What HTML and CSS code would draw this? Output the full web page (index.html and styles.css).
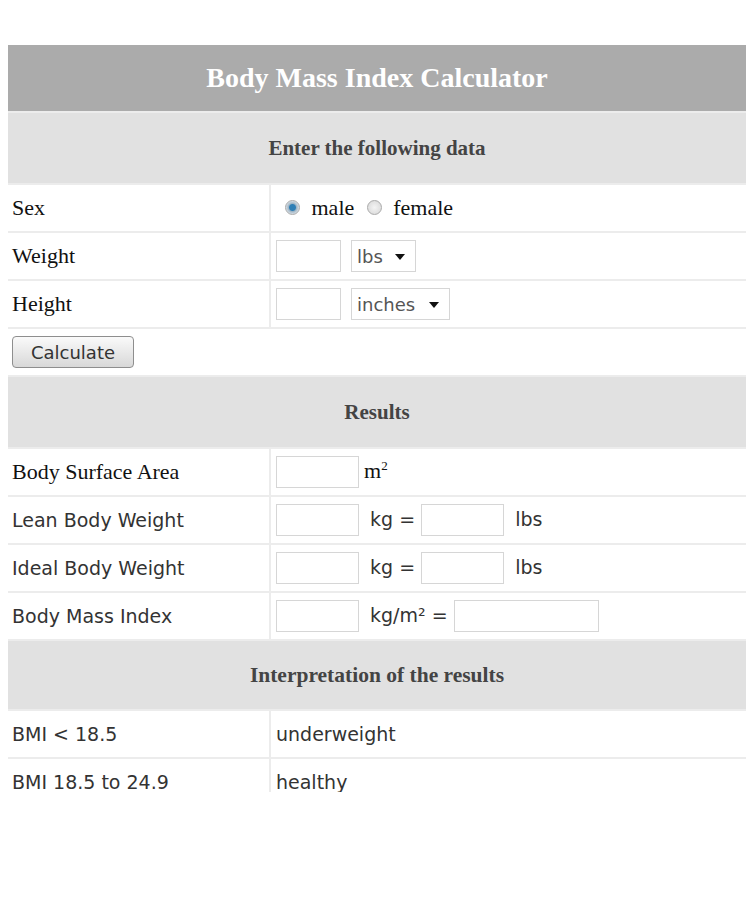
FILE: index.html
```html
<!DOCTYPE html>
<html lang="en">
<head>
  <meta charset="UTF-8">
  <title>Body Mass Index Calculator</title>
  <link rel="stylesheet" href="styles.css">
</head>
<body>

<div class="frame">
  <table class="calc">
    <tr>
      <th colspan="2" class="title">Body Mass Index Calculator</th>
    </tr>
    <tr>
      <th colspan="2" class="section">Enter the following data</th>
    </tr>
    <tr>
      <td class="label serif">Sex</td>
      <td class="serif">
        <label class="opt"><input type="radio" name="sex" checked> male</label>
        <label class="opt"><input type="radio" name="sex"> female</label>
      </td>
    </tr>
    <tr>
      <td class="label serif">Weight</td>
      <td>
        <input type="text" class="box small">
        <span class="sel"><select class="unit"><option>lbs</option><option>kg</option></select></span>
      </td>
    </tr>
    <tr>
      <td class="label serif">Height</td>
      <td>
        <input type="text" class="box small">
        <span class="sel"><select class="unit wide"><option>inches</option><option>cm</option></select></span>
      </td>
    </tr>
    <tr>
      <td colspan="2" class="actions"><button type="button">Calculate</button></td>
    </tr>
    <tr>
      <th colspan="2" class="section">Results</th>
    </tr>
    <tr>
      <td class="label serif">Body Surface Area</td>
      <td><input type="text" class="box"><span class="serif">m<sup>2</sup></span></td>
    </tr>
    <tr>
      <td class="label">Lean Body Weight</td>
      <td><input type="text" class="box"> kg = <input type="text" class="box"> lbs</td>
    </tr>
    <tr>
      <td class="label">Ideal Body Weight</td>
      <td><input type="text" class="box"> kg = <input type="text" class="box"> lbs</td>
    </tr>
    <tr>
      <td class="label">Body Mass Index</td>
      <td><input type="text" class="box"> kg/m² = <input type="text" class="box long"></td>
    </tr>
    <tr>
      <th colspan="2" class="section narrow">Interpretation of the results</th>
    </tr>
    <tr>
      <td class="label">BMI &lt; 18.5</td>
      <td>underweight</td>
    </tr>
    <tr>
      <td class="label">BMI 18.5 to 24.9</td>
      <td>healthy</td>
    </tr>
  </table>
</div>

</body>
</html>
```

FILE: styles.css
```css
body {
  margin: 0;
  background: #fff;
  font-family: "DejaVu Sans", Verdana, sans-serif;
  color: #333;
}

.frame {
  margin: 45px 0 0 8px;
  width: 738px;
  height: 747px;
  overflow: hidden;
}

.calc {
  width: 738px;
  border-collapse: separate;
  border-spacing: 0 2px;
  margin-top: -2px;
  background: #ececec;
  font-size: 19px;
}

.calc td {
  background: #fff;
  height: 46px;
  padding: 0 0 0 5px;
  vertical-align: middle;
  white-space: nowrap;
}

.calc td.label {
  width: 257px;
  padding-left: 4px;
  border-right: 2px solid #ececec;
}

.serif {
  font-family: "Liberation Serif", "Times New Roman", serif;
  font-size: 22px;
  color: #111;
}

.calc th {
  padding: 0;
  font-family: "Liberation Serif", "Times New Roman", serif;
  font-weight: bold;
}

.title {
  background: #ababab;
  color: #fff;
  font-size: 28px;
  height: 66px;
}

.section {
  background: #e1e1e1;
  color: #444;
  font-size: 21px;
  height: 70px;
}

.section.narrow {
  font-size: 21.5px;
  height: 68px;
}

.opt {
  margin-left: 9px;
}

.opt + .opt {
  margin-left: 7px;
}

.opt input {
  appearance: none;
  margin: 0 6px 0 0;
  width: 15px;
  height: 15px;
  border: 1px solid #aaa;
  border-radius: 50%;
  background: radial-gradient(#f4f4f4, #d6d6d6);
  vertical-align: 0;
}

.opt input:checked {
  background: radial-gradient(#2f7fb5 0, #2f7fb5 3px, #9fb4c4 4px, #dfe6ec 7px);
}

.box {
  width: 77px;
  height: 26px;
  border: 1px solid #d6d6d6;
  padding: 2px;
  margin: 0 5px 0 0;
  vertical-align: middle;
}

.box.small {
  width: 59px;
  margin-right: 4px;
}

.box.long {
  width: 139px;
}

.sel {
  position: relative;
  display: inline-block;
  vertical-align: middle;
}

.sel::after {
  content: "";
  position: absolute;
  right: 11px;
  top: 14px;
  border-left: 5px solid transparent;
  border-right: 5px solid transparent;
  border-top: 6px solid #111;
  pointer-events: none;
}

.unit {
  appearance: none;
  height: 32px;
  width: 65px;
  padding: 0 0 0 5px;
  border: 1px solid #d6d6d6;
  background: #fff;
  color: #555;
  font-family: "DejaVu Sans", Verdana, sans-serif;
  font-size: 18px;
}

.unit.wide {
  width: 99px;
}

sup {
  font-size: 13px;
}

.actions {
  height: 44px;
}

button {
  margin-left: -1px;
  width: 122px;
  height: 32px;
  border: 1px solid #8e8e8e;
  border-radius: 4px;
  background: linear-gradient(#fafafa, #d8d8d8);
  font-family: "DejaVu Sans", Verdana, sans-serif;
  font-size: 18px;
  color: #333;
  cursor: pointer;
}
```
